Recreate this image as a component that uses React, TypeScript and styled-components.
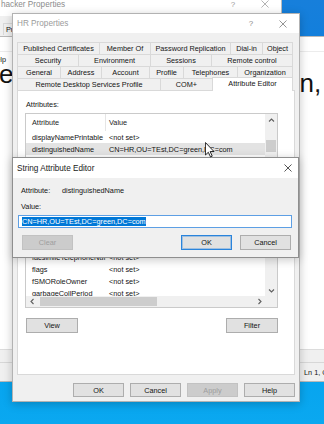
import styled, { createGlobalStyle } from "styled-components";

const GlobalStyle = createGlobalStyle`
  * { box-sizing: border-box; }
  html, body { margin: 0; padding: 0; }
  body {
    font-family: "Liberation Sans", Arial, sans-serif;
    font-size: 7.3px;
    color: #141414;
    overflow: hidden;
  }
`;

const Desktop = styled.div`
  position: relative;
  width: 324px;
  height: 424px;
  overflow: hidden;
  background: linear-gradient(180deg, #177fdb 0%, #127fdc 10%, #06a3ee 85%, #0aa8f0 100%);
`;

/* ---------- windows behind ---------- */

const BackDialog = styled.div`
  position: absolute;
  left: -120px;
  top: -8px;
  width: 402px;
  height: 60px;
  background: #f0f0f0;
  border-right: 1px solid #bcbcbc;
`;

const BackTitle = styled.div`
  height: 24px;
  display: flex;
  align-items: center;
  background: #fff;
  padding-left: 121px;
  font-size: 8.2px;
  color: #8c8c8c;
`;

const BackTabRow = styled.div`
  margin-top: 7px;
  padding-left: 123px;
  height: 12px;
  display: flex;
`;

const BackTab = styled.div`
  padding: 0 2px;
  display: flex;
  align-items: center;
  border: 1px solid #d9d9d9;
  border-bottom: none;
  white-space: nowrap;
`;

const Notepad = styled.div`
  position: absolute;
  left: -60px;
  top: 36px;
  width: 400px;
  height: 346px;
  background: #fff;
  border: 1px solid #b9b9b9;
  display: flex;
  flex-direction: column;
`;

const NotepadTitle = styled.div`
  height: 14px;
  flex: none;
`;

const NotepadMenu = styled.div`
  height: 15px;
  flex: none;
  display: flex;
  align-items: center;
  padding-left: 50px;
  border-top: 1px solid #ececec;
`;

const NotepadText = styled.div`
  flex: 1;
  display: flex;
  align-items: flex-start;
  font-size: 26px;
  line-height: 26px;
  color: #111;
  overflow: hidden;
`;

const BigGlyph = styled.span<{ $left: number; $top: number }>`
  margin-left: ${(p) => p.$left}px;
  margin-top: ${(p) => p.$top}px;
  white-space: nowrap;
`;

const NotepadScroll = styled.div`
  height: 13px;
  flex: none;
  background: #f0f0f0;
  border-top: 1px solid #dcdcdc;
`;

const NotepadStatus = styled.div`
  height: 19px;
  flex: none;
  background: #f0f0f0;
  border-top: 1px solid #d7d7d7;
  display: flex;
  align-items: center;
  padding-left: 363px;
  white-space: nowrap;
`;

/* ---------- dialog chrome ---------- */

const Window = styled.div<{ $active?: boolean }>`
  position: absolute;
  display: flex;
  flex-direction: column;
  background: #f0f0f0;
  border: 1px solid ${(p) => (p.$active ? "#8e8e8e" : "#b2b2b2")};
  box-shadow: 0 2px 9px rgba(0, 0, 0, 0.22);
`;

const HrWindow = styled(Window)`
  left: 12px;
  top: 13px;
  width: 288px;
  height: 389px;
`;

const EditorDialog = styled(Window)`
  left: 12px;
  top: 157px;
  width: 287px;
  height: 101px;
`;

const TitleBar = styled.div<{ $h: number; $inactive?: boolean }>`
  height: ${(p) => p.$h}px;
  flex: none;
  display: flex;
  align-items: center;
  background: #fff;
  padding-left: 4px;
  font-size: 8.2px;
  color: ${(p) => (p.$inactive ? "#9b9b9b" : "#1a1a1a")};
`;

const TitleText = styled.span`
  flex: 1;
  white-space: nowrap;
`;

const Caption = styled.span<{ $w: number; $color: string }>`
  width: ${(p) => p.$w}px;
  height: 100%;
  display: flex;
  align-items: center;
  justify-content: center;
  color: ${(p) => p.$color};
  font-size: 8px;
`;

const CloseIcon = ({ color }: { color: string }) => (
  <svg width="8" height="8" viewBox="0 0 10 10">
    <path d="M0.6 0.6 L9.4 9.4 M9.4 0.6 L0.6 9.4" stroke={color} strokeWidth="1" fill="none" />
  </svg>
);

const Chevron = ({ dir }: { dir: "up" | "down" | "left" | "right" }) => {
  const d = {
    up: "M1 4.5 L3.5 2 L6 4.5",
    down: "M1 2.5 L3.5 5 L6 2.5",
    left: "M4.5 1 L2 3.5 L4.5 6",
    right: "M2.5 1 L5 3.5 L2.5 6",
  }[dir];
  return (
    <svg width="7" height="7" viewBox="0 0 7 7">
      <path d={d} stroke="#5f5f5f" strokeWidth="1.1" fill="none" />
    </svg>
  );
};

const Button = styled.button<{ $w: number; $h: number; $default?: boolean }>`
  width: ${(p) => p.$w}px;
  height: ${(p) => p.$h}px;
  flex: none;
  padding: 0;
  font-family: inherit;
  font-size: 7.3px;
  color: #141414;
  background: #e1e1e1;
  border: 1px solid ${(p) => (p.$default ? "#2a84dc" : "#adadad")};
  box-shadow: ${(p) => (p.$default ? "inset 0 0 0 1px rgba(42,132,220,0.35)" : "none")};

  &:disabled {
    background: #cccccc;
    border-color: #c2c2c2;
    color: #9e9e9e;
  }
`;

/* ---------- HR Properties ---------- */

const HrBody = styled.div`
  flex: 1;
  display: flex;
  flex-direction: column;
  padding: 9px 4px 0 4px;
  min-height: 0;
`;

const TabStrip = styled.div`
  margin-right: 2px;
  display: flex;
  flex-direction: column;
`;

const TabRow = styled.div`
  height: 12px;
  display: flex;
  align-items: flex-start;
`;

const Tab = styled.div<{ $w: number; $active?: boolean }>`
  position: relative;
  z-index: ${(p) => (p.$active ? 1 : 0)};
  width: ${(p) => p.$w}px;
  height: ${(p) => (p.$active ? 14 : 12)}px;
  margin-top: ${(p) => (p.$active ? -1 : 0)}px;
  padding-bottom: ${(p) => (p.$active ? 2 : 0)}px;
  display: flex;
  align-items: center;
  justify-content: center;
  white-space: nowrap;
  background: ${(p) => (p.$active ? "#fff" : "#f0f0f0")};
  border-top: 1px solid #d9d9d9;
  border-left: 1px solid #d9d9d9;
  &:last-child {
    border-right: 1px solid #d9d9d9;
  }
`;

const Panel = styled.div`
  flex: 1;
  background: #fff;
  border: 1px solid #d9d9d9;
  padding: 9px 0 0 7px;
  display: flex;
  flex-direction: column;
`;

const FieldLabel = styled.div`
  line-height: 9px;
  padding-left: 1px;
`;

const ListBox = styled.div`
  margin-top: 4px;
  width: 253px;
  height: 195px;
  border: 1px solid #cacaca;
  display: grid;
  grid-template-columns: 1fr 12px;
  grid-template-rows: 1fr 11px;
  overflow: hidden;
`;

const ListBody = styled.div`
  min-height: 0;
  overflow: hidden;
  background: #fff;
`;

const HeaderRow = styled.div`
  height: 17px;
  display: flex;
`;

const HeaderCell = styled.div<{ $w?: number }>`
  ${(p) => (p.$w ? `width: ${p.$w}px; border-right: 1px solid #e5e5e5; padding-left: 6px;` : "flex: 1; padding-left: 3px;")}
  display: flex;
  align-items: center;
  color: #1e1e1e;
`;

const Row = styled.div<{ $selected?: boolean }>`
  height: 12px;
  display: flex;
  align-items: center;
  white-space: nowrap;
  background: ${(p) => (p.$selected ? "#e3e3e3" : "transparent")};
`;

const NameCell = styled.span`
  width: 80px;
  flex: none;
  padding-left: 6px;
  overflow: hidden;
`;

const ValueCell = styled.span`
  padding-left: 3px;
`;

const VScroll = styled.div`
  background: #f0f0f0;
  display: flex;
  flex-direction: column;
  min-height: 0;
`;

const HScroll = styled.div`
  background: #f0f0f0;
  display: flex;
  align-items: stretch;
`;

const ArrowBox = styled.div<{ $w: number; $h: number }>`
  width: ${(p) => p.$w}px;
  height: ${(p) => p.$h}px;
  flex: none;
  display: flex;
  align-items: center;
  justify-content: center;
`;

const Track = styled.div`
  flex: 1;
  display: flex;
  flex-direction: inherit;
`;

const Thumb = styled.div<{ $vertical?: boolean }>`
  background: #cdcdcd;
  ${(p) =>
    p.$vertical
      ? "margin: 14px 1px 0 1px; height: 12px;"
      : "margin: 1px 0 1px 2px; width: 117px;"}
`;

const Corner = styled.div`
  background: #f0f0f0;
`;

const PanelButtons = styled.div`
  margin-top: 10px;
  width: 253px;
  display: flex;
  justify-content: space-between;
  padding-left: 1px;
`;

const ButtonBar = styled.div`
  flex: none;
  display: flex;
  justify-content: flex-end;
  gap: 6px;
  padding: 8px 4px 4px;
`;

/* ---------- String Attribute Editor ---------- */

const EditorBody = styled.div`
  flex: 1;
  padding: 8px 6px 0 5px;
  display: flex;
  flex-direction: column;
`;

const InfoRow = styled.div<{ $gap?: number }>`
  margin-top: ${(p) => p.$gap ?? 0}px;
  line-height: 9px;
  display: flex;
  padding-left: 3px;
  white-space: nowrap;
`;

const InfoLabel = styled.span`
  width: 41px;
  flex: none;
`;

const ValueInput = styled.div`
  margin-top: 4px;
  height: 13px;
  border: 1px solid #5d9fe4;
  background: #fff;
  padding-left: 3px;
  display: flex;
  align-items: center;
`;

const Selection = styled.span`
  background: #0078d7;
  color: #fff;
  height: 9px;
  line-height: 9px;
  white-space: nowrap;
`;

const EditorButtons = styled.div`
  margin-top: 7px;
  display: flex;
  gap: 8px;
  padding: 0 1px 0 4px;
`;

const Spacer = styled.div`
  flex: 1;
`;

const Pointer = styled.svg`
  position: absolute;
  left: 205px;
  top: 142px;
  z-index: 10;
`;

type TabDef = { label: string; w: number; active?: boolean };

const tabRows: TabDef[][] = [
  [
    { label: "Published Certificates", w: 82 },
    { label: "Member Of", w: 51 },
    { label: "Password Replication", w: 80 },
    { label: "Dial-in", w: 32 },
    { label: "Object", w: 31 },
  ],
  [
    { label: "Security", w: 61 },
    { label: "Environment", w: 72 },
    { label: "Sessions", w: 61 },
    { label: "Remote control", w: 82 },
  ],
  [
    { label: "General", w: 43 },
    { label: "Address", w: 41 },
    { label: "Account", w: 48 },
    { label: "Profile", w: 34 },
    { label: "Telephones", w: 54 },
    { label: "Organization", w: 56 },
  ],
  [
    { label: "Remote Desktop Services Profile", w: 143 },
    { label: "COM+", w: 52 },
    { label: "Attribute Editor", w: 81, active: true },
  ],
];

const DN = "CN=HR,OU=TEst,DC=green,DC=com";

const attributes: { name: string; value: string }[] = [
  { name: "displayNamePrintable", value: "<not set>" },
  { name: "distinguishedName", value: DN },
  { name: "division", value: "<not set>" },
  { name: "dSCorePropagationData", value: "0x0 = ( )" },
  { name: "dynamicLDAPServer", value: "<not set>" },
  { name: "employeeID", value: "<not set>" },
  { name: "employeeNumber", value: "<not set>" },
  { name: "employeeType", value: "<not set>" },
  { name: "extensionAttribute1", value: "<not set>" },
  { name: "extensionName", value: "<not set>" },
  { name: "facsimileTelephoneNumber", value: "<not set>" },
  { name: "flags", value: "<not set>" },
  { name: "fSMORoleOwner", value: "<not set>" },
  { name: "garbageCollPeriod", value: "<not set>" },
  { name: "gecos", value: "<not set>" },
];

const App = () => (
  <Desktop>
    <GlobalStyle />

    <BackDialog>
      <BackTitle>
        <TitleText>hacker Properties</TitleText>
        <Caption $w={32} $color="#9a9a9a">?</Caption>
        <Caption $w={32} $color="#9a9a9a">
          <CloseIcon color="#a0a0a0" />
        </Caption>
      </BackTitle>
      <BackTabRow>
        <BackTab>Published Certificates</BackTab>
      </BackTabRow>
    </BackDialog>

    <Notepad>
      <NotepadTitle />
      <NotepadMenu>Help</NotepadMenu>
      <NotepadText>
        <BigGlyph $left={58} $top={-5}>e</BigGlyph>
        <BigGlyph $left={286} $top={4}>n,</BigGlyph>
      </NotepadText>
      <NotepadScroll />
      <NotepadStatus>Ln 1, Col 1</NotepadStatus>
    </Notepad>

    <HrWindow>
      <TitleBar $h={19} $inactive>
        <TitleText>HR Properties</TitleText>
        <Caption $w={32} $color="#8a8a8a">?</Caption>
        <Caption $w={32} $color="#8a8a8a">
          <CloseIcon color="#7a7a7a" />
        </Caption>
      </TitleBar>
      <HrBody>
        <TabStrip>
          {tabRows.map((row, i) => (
            <TabRow key={i}>
              {row.map((t) => (
                <Tab key={t.label} $w={t.w} $active={t.active}>
                  {t.label}
                </Tab>
              ))}
            </TabRow>
          ))}
        </TabStrip>
        <Panel>
          <FieldLabel>Attributes:</FieldLabel>
          <ListBox>
            <ListBody>
              <HeaderRow>
                <HeaderCell $w={80}>Attribute</HeaderCell>
                <HeaderCell>Value</HeaderCell>
              </HeaderRow>
              {attributes.map((a) => (
                <Row key={a.name} $selected={a.name === "distinguishedName"}>
                  <NameCell>{a.name}</NameCell>
                  <ValueCell>{a.value}</ValueCell>
                </Row>
              ))}
            </ListBody>
            <VScroll>
              <ArrowBox $w={12} $h={12}>
                <Chevron dir="up" />
              </ArrowBox>
              <Track>
                <Thumb $vertical />
              </Track>
              <ArrowBox $w={12} $h={12}>
                <Chevron dir="down" />
              </ArrowBox>
            </VScroll>
            <HScroll>
              <ArrowBox $w={12} $h={11}>
                <Chevron dir="left" />
              </ArrowBox>
              <Track>
                <Thumb />
              </Track>
              <ArrowBox $w={12} $h={11}>
                <Chevron dir="right" />
              </ArrowBox>
            </HScroll>
            <Corner />
          </ListBox>
          <PanelButtons>
            <Button $w={52} $h={15}>View</Button>
            <Button $w={52} $h={15}>Filter</Button>
          </PanelButtons>
        </Panel>
      </HrBody>
      <ButtonBar>
        <Button $w={51} $h={14}>OK</Button>
        <Button $w={51} $h={14}>Cancel</Button>
        <Button $w={51} $h={14} disabled>Apply</Button>
        <Button $w={51} $h={14}>Help</Button>
      </ButtonBar>
    </HrWindow>

    <EditorDialog $active>
      <TitleBar $h={20}>
        <TitleText>String Attribute Editor</TitleText>
        <Caption $w={20} $color="#222">
          <CloseIcon color="#2a2a2a" />
        </Caption>
      </TitleBar>
      <EditorBody>
        <InfoRow>
          <InfoLabel>Attribute:</InfoLabel>
          <span>distinguishedName</span>
        </InfoRow>
        <InfoRow $gap={7}>Value:</InfoRow>
        <ValueInput>
          <Selection>{DN}</Selection>
        </ValueInput>
        <EditorButtons>
          <Button $w={51} $h={15} disabled>Clear</Button>
          <Spacer />
          <Button $w={51} $h={15} $default>OK</Button>
          <Button $w={51} $h={15}>Cancel</Button>
        </EditorButtons>
      </EditorBody>
    </EditorDialog>

    <Pointer width="10" height="16" viewBox="0 0 12 19">
      <path
        d="M0.5 0.5 L0.5 15.5 L4 12.2 L6.6 17.8 L8.7 16.9 L6.2 11.4 L10.8 11.4 Z"
        fill="#fff"
        stroke="#000"
        strokeWidth="1"
        strokeLinejoin="round"
      />
    </Pointer>
  </Desktop>
);

export default App;
